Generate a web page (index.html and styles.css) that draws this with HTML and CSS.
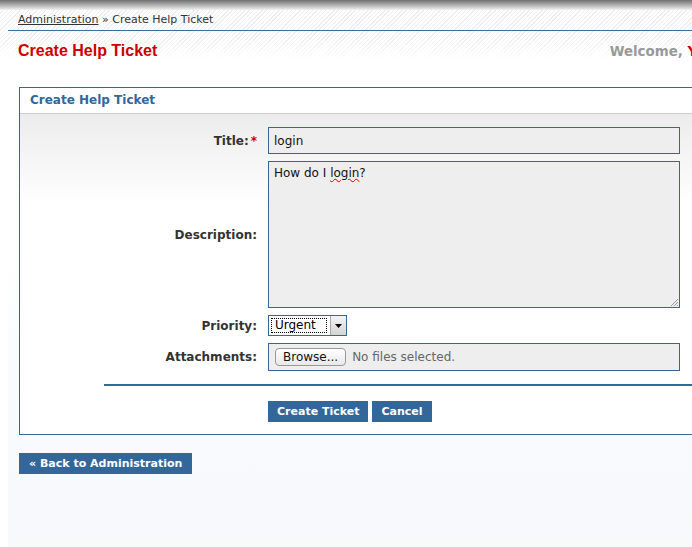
FILE: index.html
```html
<!DOCTYPE html>
<html lang="en">
<head>
    <meta charset="UTF-8">
    <title>Create Help Ticket</title>
    <link rel="stylesheet" href="styles.css">
</head>
<body>
    <div class="topbar"></div>
    <div class="page">
        <!-- header: breadcrumb + title -->
        <header class="header">
            <div class="breadcrumb">
                <a href="#">Administration</a> &raquo; Create Help Ticket
            </div>
            <div class="title-row">
                <h1 class="page-title">Create Help Ticket</h1>
                <div class="welcome">Welcome, <span class="user-name">Yvonne Admin</span></div>
            </div>
        </header>

        <main class="content">
            <div class="panel">
                <div class="panel-header">Create Help Ticket</div>
                <div class="panel-body">
                    <div class="form-row">
                        <label class="form-label">Title:<span class="required">*</span></label>
                        <input class="text-input" type="text" value="login">
                    </div>
                    <div class="form-row">
                        <label class="form-label">Description:</label>
                        <div class="textarea">How do I <span class="misspelled">login</span>?
                            <svg class="grip" width="10" height="10" viewBox="0 0 10 10">
                                <path d="M9 2 L2 9 M9 5 L5 9 M9 8 L8 9" stroke="#999" stroke-width="1"/>
                            </svg>
                        </div>
                    </div>
                    <div class="form-row">
                        <label class="form-label">Priority:</label>
                        <div class="select">
                            <span class="select-value">Urgent</span>
                            <span class="select-arrow">
                                <svg width="7" height="4" viewBox="0 0 7 4"><path d="M0 0 H7 L3.5 4 Z" fill="#000"/></svg>
                            </span>
                        </div>
                    </div>
                    <div class="form-row">
                        <label class="form-label">Attachments:</label>
                        <div class="file-input">
                            <span class="browse-btn">Browse...</span>
                            <span class="file-status">No files selected.</span>
                        </div>
                    </div>

                    <div class="form-divider"></div>

                    <div class="form-actions">
                        <button class="btn">Create Ticket</button>
                        <button class="btn">Cancel</button>
                    </div>
                </div>
            </div>

            <button class="btn btn-back">&laquo; Back to Administration</button>
        </main>
    </div>
</body>
</html>
```

FILE: styles.css
```css
* {
    margin: 0;
    padding: 0;
    box-sizing: border-box;
}

html, body {
    overflow: hidden;
}

body {
    font-family: 'DejaVu Sans', Verdana, sans-serif;
    font-size: 12px;
    color: #222;
    background-color: #fff;
    min-height: 547px;
}

.topbar {
    height: 10px;
    background: linear-gradient(#6f6f6f, #a9a9a9 45%, #f2f2f2);
}

.page {
    width: 796px;
}

/* header */
.header {
    background:
        linear-gradient(rgba(255, 255, 255, 0) 55%, #fff),
        repeating-linear-gradient(135deg, #fff 0 2px, #efefef 2px 3px);
    height: 50px;
}

.breadcrumb {
    margin-left: 8px;
    padding: 2px 10px 0;
    height: 21px;
    border-bottom: 1px solid #3a6e9f;
    font-size: 11px;
    color: #333;
    line-height: 15px;
}

.breadcrumb a {
    color: #333;
}

.title-row {
    display: flex;
    align-items: baseline;
    padding: 11px 0 0 18px;
}

.page-title {
    font-family: 'Liberation Sans', Arial, sans-serif;
    font-size: 16px;
    font-weight: bold;
    color: #cc0000;
}

.welcome {
    margin-left: auto;
    font-size: 13.4px;
    font-weight: bold;
    color: #999;
    white-space: nowrap;
}

.user-name {
    color: #cc0000;
}

/* content */
.content {
    margin-left: 8px;
    padding: 27px 0 80px 11px;
    background: linear-gradient(#fff 40%, #f8fafd 70%, #f7f9fb);
}

.panel {
    border: 1px solid #336699;
    background-color: #fff;
    margin-bottom: 18px;
}

.panel-header {
    height: 26px;
    padding: 0 10px;
    line-height: 25px;
    font-weight: bold;
    font-size: 12px;
    color: #336699;
    border-bottom: 1px solid #cccccc;
}

.panel-body {
    padding: 13px 0 12px;
    background: linear-gradient(#ececec, #fff 90px);
}

.form-row {
    display: grid;
    grid-template-columns: 237px 412px;
    column-gap: 11px;
    align-items: center;
    margin-bottom: 7px;
}

.form-label {
    text-align: right;
    font-weight: bold;
    font-size: 12px;
    color: #333;
}

.required {
    color: #cc0000;
    margin-left: 2px;
}

.text-input,
.textarea,
.file-input {
    border: 1px solid #336699;
    background-color: #eeeeee;
    font-family: 'DejaVu Sans', Verdana, sans-serif;
    font-size: 12px;
    color: #111;
}

.text-input {
    height: 27px;
    padding: 0 5px;
    outline: none;
}

.textarea {
    position: relative;
    height: 147px;
    padding: 4px 5px;
}

.misspelled {
    text-decoration: underline wavy #dd0000;
    text-decoration-thickness: 1px;
}

.grip {
    position: absolute;
    right: 0;
    bottom: 0;
}

.select {
    display: flex;
    align-items: stretch;
    width: 79px;
    height: 21px;
    border: 1px solid #336699;
    background-color: #fff;
}

.select-value {
    flex: 1;
    margin: 2px 3px 2px 2px;
    padding: 0 3px;
    border: 1px dotted #000;
    line-height: 13px;
    font-size: 12px;
    color: #000;
}

.select-arrow {
    width: 16px;
    display: flex;
    align-items: center;
    justify-content: center;
    background: linear-gradient(#f4f4f4, #d4d4d4);
    border-left: 1px solid #aaa;
}

.file-input {
    height: 28px;
    display: flex;
    align-items: center;
    padding: 0 6px;
}

.browse-btn {
    border: 1px solid #999;
    border-radius: 4px;
    background: linear-gradient(#fff, #e8e8e8);
    padding: 1px 7px;
    color: #111;
    margin-right: 6px;
}

.file-status {
    color: #666;
}

.form-divider {
    margin: 13px 0 0 84px;
    border-top: 2px solid #2a6d9c;
}

.form-actions {
    display: flex;
    gap: 4px;
    padding: 15px 0 0 248px;
}

.btn {
    height: 21px;
    padding: 0 9px;
    border: none;
    background-color: #336699;
    color: #fff;
    font-family: 'DejaVu Sans', Verdana, sans-serif;
    font-size: 11px;
    font-weight: bold;
    cursor: pointer;
}

.btn-back {
    display: block;
    padding: 0 10px;
}
```
